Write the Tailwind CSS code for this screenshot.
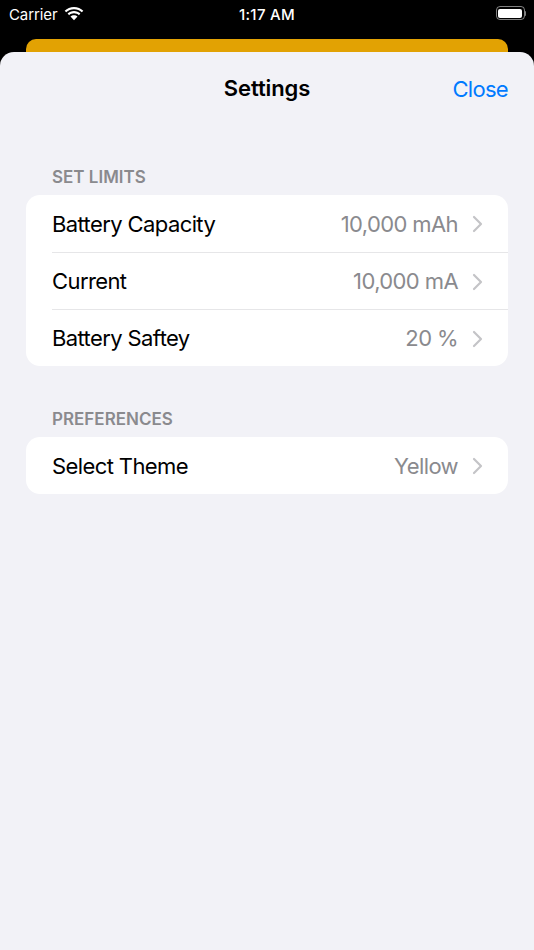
<!DOCTYPE html>
<html lang="en">
<head>
    <meta charset="UTF-8">
    <meta name="viewport" content="width=device-width, initial-scale=1.0">
    <script src="https://cdn.jsdelivr.net/npm/@tailwindcss/browser@4"></script>
    <title>Settings</title>
</head>
<body class="bg-black h-[950px] w-[534px] overflow-hidden flex flex-col font-['Inter',sans-serif]">

    <!-- status bar -->
    <div class="h-[39px] px-[9px] grid grid-cols-3 items-start pt-[4px] text-white text-[15px] leading-[20px]">
        <div class="flex items-center gap-[7px] pt-[1px]">
            <span class="tracking-[-0.1px]">Carrier</span>
            <svg class="w-[20px] h-[15px] -mt-[4px]" viewBox="0 0 20 15" fill="white">
                <path d="M10 3.2c3 0 5.7 1.2 7.8 3.1l1.500-1.600C16.900 2.400 13.600 1 10 1S3.100 2.400.7 4.700l1.500 1.600C4.300 4.400 7 3.200 10 3.200z"/>
                <path d="M10 7.300c1.900 0 3.600.7 4.900 1.900l1.500-1.600C14.700 6 12.500 5.100 10 5.100S5.300 6 3.600 7.600l1.500 1.600c1.300-1.200 3-1.900 4.900-1.900z"/>
                <path d="M10 9.200c-1.400 0-2.600.5-3.500 1.400L10 14.300l3.500-3.700c-.9-.9-2.100-1.400-3.500-1.400z"/>
            </svg>
        </div>
        <div class="text-center font-medium pt-[1px] tracking-[0.3px]">1:17 AM</div>
        <div class="flex justify-end -mr-[1px]">
            <div class="flex items-center mt-[2px]">
                <div class="w-[29px] h-[14px] rounded-[4px] border border-white/50 p-[1.5px]">
                    <div class="w-full h-full bg-white rounded-[2px]"></div>
                </div>
                <div class="w-[1.5px] h-[5px] bg-white/50 rounded-r-sm"></div>
            </div>
        </div>
    </div>

    <!-- sheet behind -->
    <div class="h-[13px] mx-[26px] shrink-0 bg-[#e2a203] rounded-t-[10px]"></div>

    <!-- settings sheet -->
    <div class="flex-1 bg-[#f2f2f7] rounded-t-[14px]">
        <div class="relative h-[73px] flex items-center justify-center">
            <h1 class="text-[22px] font-semibold text-black -mt-[1px] tracking-[-0.1px]">Settings</h1>
            <button class="absolute right-[26px] top-[22px] text-[22px] leading-[30px] text-[#007aff] tracking-[-0.7px]">Close</button>
        </div>

        <div class="px-[26px] pt-[42px]">
            <h2 class="px-[26px] text-[17px] leading-[20px] font-semibold text-[#8a8a8e] mb-[8px]">SET LIMITS</h2>
            <div class="bg-white rounded-[14px] text-[22px] tracking-[-0.6px]">
                <div class="h-[57px] pt-[1px] pl-[26px] pr-[25px] flex items-center justify-between">
                    <span class="text-black">Battery Capacity</span>
                    <div class="flex items-center gap-[14px] text-[#8a8a8e]">
                        <span>10,000 mAh</span>
                        <svg class="w-[11px] h-[18px]" viewBox="0 0 11 18" fill="none" stroke="#c4c4c7" stroke-width="2.200" stroke-linecap="round" stroke-linejoin="round"><path d="M2 2l7 7-7 7"/></svg>
                    </div>
                </div>
                <div class="h-[57px] pt-[1px] ml-[26px] pr-[25px] border-t border-[#e6e6e8] flex items-center justify-between">
                    <span class="text-black">Current</span>
                    <div class="flex items-center gap-[14px] text-[#8a8a8e]">
                        <span>10,000 mA</span>
                        <svg class="w-[11px] h-[18px]" viewBox="0 0 11 18" fill="none" stroke="#c4c4c7" stroke-width="2.200" stroke-linecap="round" stroke-linejoin="round"><path d="M2 2l7 7-7 7"/></svg>
                    </div>
                </div>
                <div class="h-[57px] pt-[1px] ml-[26px] pr-[25px] border-t border-[#e6e6e8] flex items-center justify-between">
                    <span class="text-black">Battery Saftey</span>
                    <div class="flex items-center gap-[14px] text-[#8a8a8e]">
                        <span>20 %</span>
                        <svg class="w-[11px] h-[18px]" viewBox="0 0 11 18" fill="none" stroke="#c4c4c7" stroke-width="2.200" stroke-linecap="round" stroke-linejoin="round"><path d="M2 2l7 7-7 7"/></svg>
                    </div>
                </div>
            </div>

            <h2 class="px-[26px] text-[17px] leading-[20px] font-semibold text-[#8a8a8e] mt-[43px] mb-[8px]">PREFERENCES</h2>
            <div class="bg-white rounded-[14px] text-[22px] tracking-[-0.6px]">
                <div class="h-[57px] pt-[1px] pl-[26px] pr-[25px] flex items-center justify-between">
                    <span class="text-black">Select Theme</span>
                    <div class="flex items-center gap-[14px] text-[#8a8a8e]">
                        <span>Yellow</span>
                        <svg class="w-[11px] h-[18px]" viewBox="0 0 11 18" fill="none" stroke="#c4c4c7" stroke-width="2.200" stroke-linecap="round" stroke-linejoin="round"><path d="M2 2l7 7-7 7"/></svg>
                    </div>
                </div>
            </div>
        </div>
    </div>

</body>
</html>
